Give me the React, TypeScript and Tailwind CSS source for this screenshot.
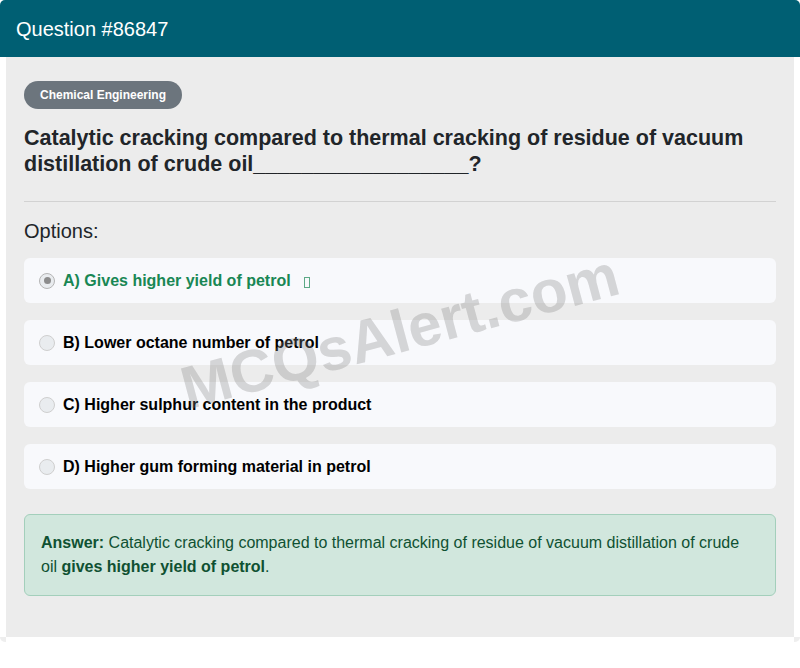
import React from 'react'

const options = [
  { key: 'A', text: 'Gives higher yield of petrol', correct: true },
  { key: 'B', text: 'Lower octane number of petrol', correct: false },
  { key: 'C', text: 'Higher sulphur content in the product', correct: false },
  { key: 'D', text: 'Higher gum forming material in petrol', correct: false },
]

function Radio({ checked }: { checked: boolean }) {
  return (
    <span
      className={`flex h-4 w-4 shrink-0 items-center justify-center rounded-full border bg-[#e9ecef] ${
        checked ? 'border-[#b5b5b5]' : 'border-[#cfcfcf]'
      }`}
    >
      {checked && <span className="h-[7px] w-[7px] rounded-full bg-[#8c8c8c]" />}
    </span>
  )
}

export default function App() {
  return (
    <div className="relative min-h-[668px] bg-white font-['Liberation_Sans',Arial,sans-serif]">
      {/* Header */}
      <div className="flex h-[57px] items-center rounded-t-[5px] bg-[#005f73] px-4">
        <h1 className="text-[20px] font-normal text-white">Question #86847</h1>
      </div>

      {/* Body */}
      <div className="mx-1.5 bg-[#ececec] px-[18px] pb-[41px] pt-6">
        <span className="inline-flex h-7 items-center rounded-full bg-[#6c757d] px-4 text-xs font-bold text-white">
          Chemical Engineering
        </span>

        <h2 className="mt-4 text-[21.5px] font-bold leading-[26px] text-[#212529]">
          Catalytic cracking compared to thermal cracking of residue of vacuum distillation of crude
          oil__________________?
        </h2>

        <hr className="mt-6 border-0 border-t border-[#d2d2d2]" />

        <p className="mt-[17px] text-[20px] leading-6 text-[#212529]">Options:</p>

        <div className="mt-[15px]">
          {options.map((o) => (
            <div
              key={o.key}
              className="mb-[17px] flex h-[45px] items-center gap-2 rounded-md bg-[#f8f9fc] px-[15px]"
            >
              <Radio checked={o.correct} />
              <span
                className={`text-base font-bold ${o.correct ? 'text-[#198754]' : 'text-black'}`}
              >
                {o.key}) {o.text}
              </span>
              {o.correct && (
                <span className="ml-[5px] mt-[3px] inline-block h-[11px] w-[6px] border border-[#198754]/70" />
              )}
            </div>
          ))}
        </div>

        {/* Answer */}
        <div className="mt-[25px] rounded-md border border-[#a3cfbb] bg-[#d1e7dd] p-4 text-base leading-6 text-[#0f5132]">
          <b>Answer:</b> Catalytic cracking compared to thermal cracking of residue of vacuum
          distillation of crude oil <b>gives higher yield of petrol</b>.
        </div>
      </div>
      <div className="flex justify-between">
        <span className="h-[5px] w-1.5 rounded-bl-[5px] bg-[#eeeeee]" />
        <span className="h-[5px] w-1.5 rounded-br-[5px] bg-[#eeeeee]" />
      </div>

      {/* Watermark */}
      <div className="pointer-events-none absolute left-0 top-[332px] flex w-full -translate-y-1/2 justify-center">
        <span className="-rotate-[15deg] text-[60px] font-bold leading-none text-[#808080]/30">
          MCQsAlert.com
        </span>
      </div>
    </div>
  )
}
